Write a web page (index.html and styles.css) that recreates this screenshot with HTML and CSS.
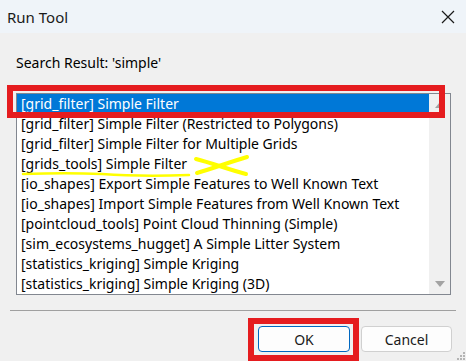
FILE: index.html
```html
<!DOCTYPE html>
<html lang="en">
<head>
    <meta charset="UTF-8">
    <title>Run Tool</title>
    <link rel="stylesheet" href="styles.css">
</head>
<body>
    <div class="window">
        <div class="titlebar">
            <span class="title">Run Tool</span>
            <svg class="close-icon" width="14" height="14" viewBox="0 0 14 14">
                <path d="M1 1 L13 13 M13 1 L1 13" stroke="#1a1a1a" stroke-width="1.2" fill="none"/>
            </svg>
        </div>

        <div class="content">
            <div class="search-label">Search Result: 'simple'</div>

            <div class="listbox">
                <ul class="items">
                    <li class="item selected">[grid_filter] Simple Filter</li>
                    <li class="item">[grid_filter] Simple Filter (Restricted to Polygons)</li>
                    <li class="item">[grid_filter] Simple Filter for Multiple Grids</li>
                    <li class="item">[grids_tools] Simple Filter</li>
                    <li class="item">[io_shapes] Export Simple Features to Well Known Text</li>
                    <li class="item">[io_shapes] Import Simple Features from Well Known Text</li>
                    <li class="item">[pointcloud_tools] Point Cloud Thinning (Simple)</li>
                    <li class="item">[sim_ecosystems_hugget] A Simple Litter System</li>
                    <li class="item">[statistics_kriging] Simple Kriging</li>
                    <li class="item">[statistics_kriging] Simple Kriging (3D)</li>
                </ul>
                <div class="scrollbar">
                    <div class="arrow-box"><span class="arrow up"></span></div>
                    <div class="arrow-box"><span class="arrow down"></span></div>
                </div>
            </div>
        </div>

        <div class="separator"></div>

        <div class="buttons">
            <button class="btn btn-default">OK</button>
            <button class="btn">Cancel</button>
        </div>

        <!-- annotations drawn over the dialog -->
        <div class="mark mark-list"></div>
        <div class="mark mark-ok"></div>
        <svg class="scribble" width="466" height="361" viewBox="0 0 466 361">
            <path d="M23 174 C50 173 80 173 102 174 C130 176 160 176 189 175" stroke="#ffff00" stroke-width="2.5" fill="none" stroke-linecap="round"/>
            <path d="M196 159 C212 163 230 170 246 174" stroke="#ffff00" stroke-width="4" fill="none" stroke-linecap="round"/>
            <path d="M197 173 C214 168 230 162 247 157" stroke="#ffff00" stroke-width="4" fill="none" stroke-linecap="round"/>
        </svg>

        <svg class="grip" width="8" height="8" viewBox="0 0 8 8">
            <rect x="6" y="0" width="2" height="2" fill="#b4b4b4"/>
            <rect x="3" y="3" width="2" height="2" fill="#b4b4b4"/>
            <rect x="6" y="3" width="2" height="2" fill="#b4b4b4"/>
            <rect x="0" y="6" width="2" height="2" fill="#b4b4b4"/>
            <rect x="3" y="6" width="2" height="2" fill="#b4b4b4"/>
            <rect x="6" y="6" width="2" height="2" fill="#b4b4b4"/>
        </svg>
    </div>
</body>
</html>
```

FILE: styles.css
```css
body {
    margin: 0;
    padding: 0;
    background-color: #f0f0f0;
    font-family: 'Noto Sans', 'Open Sans', sans-serif;
    font-size: 14px;
    color: #000;
}

.window {
    position: relative;
    width: 466px;
    height: 361px;
    overflow: hidden;
    background-color: #f0f0f0;
}

.titlebar {
    height: 33px;
    background-color: #eff4f9;
    display: flex;
    align-items: center;
    justify-content: space-between;
    padding: 0 11px 0 7px;
}

.title {
    font-size: 15px;
    color: #1a1a1a;
}

.content {
    padding: 0 15px 0 16px;
}

.search-label {
    height: 20px;
    line-height: 20px;
    margin-top: 20px;
}

.listbox {
    margin-top: 20px;
    height: 200px;
    border: 1px solid #828790;
    background-color: #fff;
    display: flex;
}

.items {
    list-style: none;
    margin: 0;
    padding: 0;
    flex: 1;
}

.item {
    height: 20px;
    line-height: 20px;
    padding-left: 4px;
    white-space: nowrap;
    color: #000;
}

.item.selected {
    background-color: #0078d7;
    color: #fff;
}

.scrollbar {
    width: 21px;
    background-color: #f0f0f0;
    display: flex;
    flex-direction: column;
    justify-content: space-between;
}

.arrow-box {
    height: 21px;
    display: flex;
    align-items: center;
    justify-content: center;
}

.arrow {
    width: 0;
    height: 0;
    border-left: 5px solid transparent;
    border-right: 5px solid transparent;
}

.arrow.up {
    border-bottom: 6px solid #a3a3a3;
}

.arrow.down {
    border-top: 6px solid #a3a3a3;
}

.separator {
    height: 1px;
    background-color: #a0a0a0;
    margin: 15px 10px 0 10px;
}

.buttons {
    display: flex;
    justify-content: flex-end;
    gap: 11px;
    padding: 15px 14px 0 0;
}

.btn {
    width: 91px;
    height: 26px;
    border: 1px solid #d0d0d0;
    border-radius: 4px;
    background-color: #fdfdfd;
    font-family: inherit;
    font-size: 14px;
    color: #1a1a1a;
    padding: 0;
}

.btn-default {
    width: 92px;
    border-color: #0067c0;
}

.mark {
    position: absolute;
    border: 6px solid #e51c1f;
    box-sizing: border-box;
}

.mark-list {
    left: 7px;
    top: 85px;
    width: 438px;
    height: 33px;
}

.mark-ok {
    left: 248px;
    top: 318px;
    width: 111px;
    height: 43px;
}

.scribble {
    position: absolute;
    left: 0;
    top: 0;
    pointer-events: none;
}

.grip {
    position: absolute;
    right: 1px;
    bottom: 1px;
}
```
